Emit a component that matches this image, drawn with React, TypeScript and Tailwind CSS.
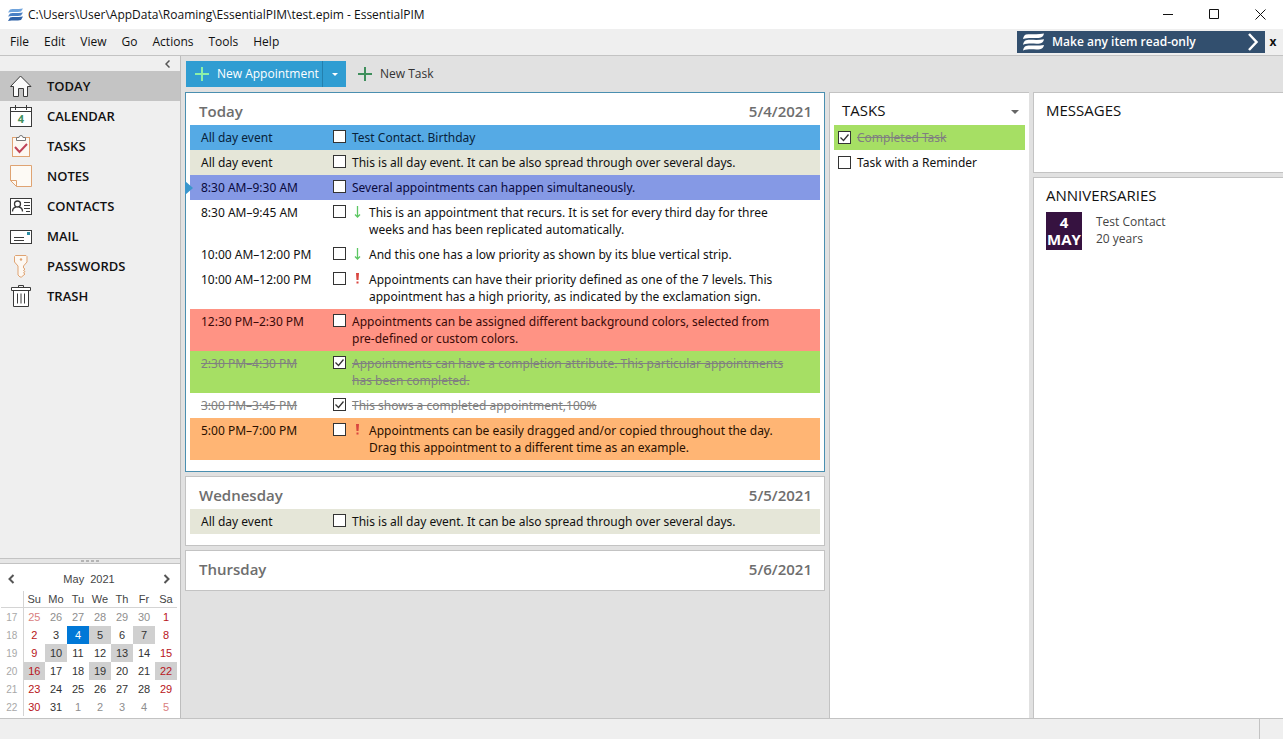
import { ReactNode } from "react";

interface Appointment {
  time: string;
  text: string;
  color?: string;
  done?: boolean;
  current?: boolean;
  priority?: "low" | "high";
}

interface Day {
  name: string;
  date: string;
  items: Appointment[];
}

const MENU = ["File", "Edit", "View", "Go", "Actions", "Tools", "Help"];

const DAYS: Day[] = [
  {
    name: "Today",
    date: "5/4/2021",
    items: [
      { time: "All day event", text: "Test Contact. Birthday", color: "bg-[#55aae5] text-[#08223a]" },
      {
        time: "All day event",
        text: "This is all day event. It can be also spread through over several days.",
        color: "bg-[#e5e6d8]",
      },
      {
        time: "8:30 AM–9:30 AM",
        text: "Several appointments can happen simultaneously.",
        color: "bg-[#8599e5] text-[#0a0a3c]",
        current: true,
      },
      {
        time: "8:30 AM–9:45 AM",
        text: "This is an appointment that recurs. It is set for every third day for three weeks and has been replicated automatically.",
        priority: "low",
      },
      {
        time: "10:00 AM–12:00 PM",
        text: "And this one has a low priority as shown by its blue vertical strip.",
        priority: "low",
      },
      {
        time: "10:00 AM–12:00 PM",
        text: "Appointments can have their priority defined as one of the 7 levels. This appointment has a high priority, as indicated by the exclamation sign.",
        priority: "high",
      },
      {
        time: "12:30 PM–2:30 PM",
        text: "Appointments can be assigned different background colors, selected from pre-defined or custom colors.",
        color: "bg-[#ff9384] text-[#3a0a08]",
      },
      {
        time: "2:30 PM–4:30 PM",
        text: "Appointments can have a completion attribute. This particular appointments has been completed.",
        color: "bg-[#a6df64]",
        done: true,
      },
      { time: "3:00 PM–3:45 PM", text: "This shows a completed appointment,100%", done: true },
      {
        time: "5:00 PM–7:00 PM",
        text: "Appointments can be easily dragged and/or copied throughout the day. Drag this appointment to a different time as an example.",
        color: "bg-[#ffb574] text-[#2a1000]",
        priority: "high",
      },
    ],
  },
  {
    name: "Wednesday",
    date: "5/5/2021",
    items: [
      {
        time: "All day event",
        text: "This is all day event. It can be also spread through over several days.",
        color: "bg-[#e5e6d8]",
      },
    ],
  },
  { name: "Thursday", date: "5/6/2021", items: [] },
];

const WEEKDAYS = ["Su", "Mo", "Tu", "We", "Th", "Fr", "Sa"];
const WEEKS = [
  { week: 17, days: [25, 26, 27, 28, 29, 30, 1] },
  { week: 18, days: [2, 3, 4, 5, 6, 7, 8] },
  { week: 19, days: [9, 10, 11, 12, 13, 14, 15] },
  { week: 20, days: [16, 17, 18, 19, 20, 21, 22] },
  { week: 21, days: [23, 24, 25, 26, 27, 28, 29] },
  { week: 22, days: [30, 31, 1, 2, 3, 4, 5] },
];
const BUSY = [5, 7, 10, 13, 16, 19, 22];

function Icon({ children }: { children: ReactNode }) {
  return (
    <svg width="24" height="24" viewBox="0 0 24 24" fill="none" strokeWidth="1" className="shrink-0">
      {children}
    </svg>
  );
}

const NAV: { label: string; icon: ReactNode }[] = [
  {
    label: "TODAY",
    icon: (
      <Icon>
        <path
          d="M1.500 12.500 11.500 2l10.500 10.500H18.500V22.500H14.500V14.500H9.500V22.500H4.500V12.500Z"
          fill="#fbfbfb"
          stroke="#3a3a3a"
          strokeLinejoin="round"
        />
      </Icon>
    ),
  },
  {
    label: "CALENDAR",
    icon: (
      <Icon>
        <rect x="1.500" y="3.500" width="21" height="19" fill="#fff" stroke="#3a3a3a" />
        <path d="M1.500 7.500h21M6.500 1v5M17.500 1v5" stroke="#3a3a3a" />
        <text x="12" y="19" textAnchor="middle" className="font-['Open_Sans'] text-[11px] font-bold" fill="#3f8f5c">
          4
        </text>
      </Icon>
    ),
  },
  {
    label: "TASKS",
    icon: (
      <Icon>
        <rect x="3.500" y="3.500" width="17" height="19" fill="#fdf8f2" stroke="#dfa372" />
        <path d="M7.500 6.500v-3h2.500a2 2 0 0 1 4 0h2.500v3Z" fill="#fff" stroke="#777" />
        <path d="m6 13 4.500 5L18 10" stroke="#c04257" strokeWidth="2" />
      </Icon>
    ),
  },
  {
    label: "NOTES",
    icon: (
      <Icon>
        <path d="M1.500 1.500h21v21H7.500l-6-6Z" fill="#fdfaf5" stroke="#dfa372" />
        <path d="M1.500 16.500h6v6" stroke="#dfa372" />
      </Icon>
    ),
  },
  {
    label: "CONTACTS",
    icon: (
      <Icon>
        <rect x="1.500" y="4.500" width="21" height="16" fill="#fff" stroke="#3a3a3a" />
        <circle cx="8.500" cy="10" r="3" stroke="#3a3a3a" strokeWidth="1.300" />
        <path d="M3.500 17.500c0-3 1.500-4 3.500-4.500M13.500 17.500c0-3-1.500-4-3.500-4.500" stroke="#3a3a3a" strokeWidth="1.300" />
        <path d="M15 8.500h6M15 11.500h6M15 14.500h6M17 17.500h4" stroke="#3a3a3a" />
      </Icon>
    ),
  },
  {
    label: "MAIL",
    icon: (
      <Icon>
        <rect x="1.500" y="6.500" width="21" height="13" fill="#fff" stroke="#3a3a3a" />
        <path d="M5 13.500h10M5 16.500h10" stroke="#3a3a3a" />
        <rect x="18" y="8" width="3" height="3" fill="#2b8ba3" />
      </Icon>
    ),
  },
  {
    label: "PASSWORDS",
    icon: (
      <Icon>
        <path
          d="M6.500 1.500h10.500l1 1v5.500l-3.500 4v2l1.500 1-1.500 1.500 1.500 1-1.500 1.500 1.500 1-3.500 3h-1.500l-2-2v-9l-3.500-4V2.500Z"
          fill="#fdf8f2"
          stroke="#dfa372"
        />
        <circle cx="12" cy="5.500" r="1.200" fill="#dfa372" />
      </Icon>
    ),
  },
  {
    label: "TRASH",
    icon: (
      <Icon>
        <path d="M4.500 6.500h15v16h-15Z" fill="#fff" stroke="#3a3a3a" />
        <path d="M2.500 3.500h19v3h-19Z" fill="#fff" stroke="#3a3a3a" />
        <path d="M9.500 3.500v-2h5v2M8.500 9.500v10M12 9.500v10M15.500 9.500v10" stroke="#3a3a3a" />
      </Icon>
    ),
  },
];

function Plus({ color }: { color: string }) {
  return (
    <svg width="14" height="14" viewBox="0 0 14 14" className="shrink-0">
      <path d="M7 0v14M0 7h14" stroke={color} strokeWidth="2" />
    </svg>
  );
}

function Checkbox({ label, checked }: { label: string; checked?: boolean }) {
  return (
    <span className="grid h-[13px] w-[13px] shrink-0">
      <input
        type="checkbox"
        aria-label={label}
        defaultChecked={checked}
        className="peer col-start-1 row-start-1 h-[13px] w-[13px] appearance-none border border-[#333] bg-white"
      />
      <svg
        viewBox="0 0 13 13"
        className="pointer-events-none invisible col-start-1 row-start-1 h-[13px] w-[13px] peer-checked:visible"
      >
        <path d="m2.500 6.500 3 3 5-6" fill="none" stroke="#333" strokeWidth="1.300" />
      </svg>
    </span>
  );
}

function Priority({ level }: { level: "low" | "high" }) {
  if (level === "low") {
    return (
      <svg width="11" height="17" viewBox="0 0 11 17" className="mr-1.5 shrink-0">
        <path d="M5.500 2v11M3 10.500l2.500 2.500 2.500-2.500" fill="none" stroke="#5cc763" strokeWidth="1.300" />
      </svg>
    );
  }
  return (
    <svg width="11" height="17" viewBox="0 0 11 17" className="mr-1.5 shrink-0">
      <path d="M4 2h3l-.5 7h-2ZM4.500 10.500h2v2h-2Z" fill="#d9453f" />
    </svg>
  );
}

function AppointmentRow({ item }: { item: Appointment }) {
  const tone = item.done ? "text-[#808080] line-through" : "";
  return (
    <li className={`relative flex py-1 pr-7 pl-[11px] ${item.color ?? ""}`}>
      {item.current && (
        <svg width="8" height="14" viewBox="0 0 8 14" className="absolute top-1.5 -left-[5px]">
          <path d="M0 0v14l8-7Z" fill="#3a96cc" />
        </svg>
      )}
      <span className={`w-[132px] shrink-0 ${tone}`}>
        <span>{item.time}</span>
      </span>
      <span className="mt-px mr-1.5 shrink-0">
        <Checkbox label={item.text} checked={item.done} />
      </span>
      {item.priority && <Priority level={item.priority} />}
      <span className={tone}>{item.text}</span>
    </li>
  );
}

function DayPanel({ day, active }: { day: Day; active: boolean }) {
  return (
    <section className={`border bg-white px-1 ${active ? "border-[#4a8fb0]" : "border-[#c3c3c3]"}`}>
      <h2 className="flex h-8 items-center justify-between pt-1 pr-2 pl-[9px] text-[15px] font-semibold text-[#6e6e6e]">
        <span>{day.name}</span>
        <span>{day.date}</span>
      </h2>
      <ul className={`font-['Noto_Sans','Open_Sans',sans-serif] text-[12px] leading-[17px] ${day.items.length ? "pb-[11px]" : "pb-[7px]"}`}>
        {day.items.map((item, i) => (
          <AppointmentRow key={i} item={item} />
        ))}
      </ul>
    </section>
  );
}

function dayClass(day: number, row: number, col: number) {
  const outside = (row === 0 && day > 20) || (row === 5 && day < 20);
  const weekend = col === 0 || col === 6;
  if (!outside && day === 4) return "bg-[#0078d7] text-white";
  const text = outside
    ? weekend
      ? "text-[#d98080]"
      : "text-[#8e8e8e]"
    : weekend
      ? "text-[#b81420]"
      : "text-[#333]";
  return !outside && BUSY.includes(day) ? `${text} bg-[#d0d0d0]` : text;
}

function MiniCalendar() {
  return (
    <section className="border-t border-[#c3c3c3] bg-white pb-0.5 font-['Liberation_Sans',Arial,sans-serif] text-[11px] text-[#444]">
      <header className="flex h-[27px] items-center justify-between px-2 pt-1">
        <button type="button" aria-label="Previous month">
          <svg width="7" height="10" viewBox="0 0 7 10">
            <path d="M5.500 1 1.500 5l4 4" fill="none" stroke="#555" strokeWidth="2" />
          </svg>
        </button>
        <span className="flex gap-1.5">
          <span>May</span>
          <span>2021</span>
        </span>
        <button type="button" aria-label="Next month" className="mr-0.5">
          <svg width="7" height="10" viewBox="0 0 7 10">
            <path d="M1.500 1l4 4-4 4" fill="none" stroke="#555" strokeWidth="2" />
          </svg>
        </button>
      </header>
      <div className="pr-[3px] pl-px">
        <table className="w-full table-fixed border-collapse text-center">
          <thead>
            <tr className="h-[17px] border-b border-[#d4d4d4]">
              <th aria-label="Week" className="w-[22px] border-r border-[#d4d4d4]" />
              {WEEKDAYS.map((d) => (
                <th key={d} className="p-0 font-normal leading-4">
                  {d}
                </th>
              ))}
            </tr>
          </thead>
          <tbody>
            {WEEKS.map((w, row) => (
              <tr key={w.week} className="h-[18px]">
                <th className="border-r border-[#d4d4d4] p-0 text-[10px] font-normal text-[#a8a8a8]">{w.week}</th>
                {w.days.map((d, col) => (
                  <td key={col} className={`p-0 leading-[18px] ${dayClass(d, row, col)}`}>
                    {d}
                  </td>
                ))}
              </tr>
            ))}
          </tbody>
        </table>
      </div>
    </section>
  );
}

function Sidebar() {
  return (
    <aside className="flex w-[181px] shrink-0 flex-col border-r border-[#bdbdbd] bg-[#efefef]">
      <button type="button" aria-label="Collapse" className="flex h-[15px] items-center justify-end pr-2.5">
        <svg width="5" height="8" viewBox="0 0 5 8">
          <path d="M4.500.5 1 4l3.500 3.500" fill="none" stroke="#555" strokeWidth="1.500" />
        </svg>
      </button>
      <nav className="flex-1">
        {NAV.map((item, i) => (
          <a
            key={item.label}
            href="#"
            className={`flex h-[30px] items-center gap-3.5 pl-[9px] text-[13px] font-semibold text-[#111] ${i === 0 ? "bg-[#c4c4c4]" : ""}`}
          >
            {item.icon}
            <span className="pt-0.5">{item.label}</span>
          </a>
        ))}
      </nav>
      <div className="flex h-[5px] items-center justify-center gap-0.5 border-t border-[#c3c3c3] bg-[#e6e6e6]">
        {[0, 1, 2, 3].map((n) => (
          <span key={n} className="h-0.5 w-[3px] bg-[#b4b4b4]" />
        ))}
      </div>
      <MiniCalendar />
    </aside>
  );
}

export default function App() {
  return (
    <div className="flex min-h-screen flex-col bg-[#efefef] font-['Open_Sans','Noto_Sans',sans-serif] text-[12px] text-[#111]">
      <header className="flex h-[29px] items-center bg-white pl-2">
        <svg width="15" height="14" viewBox="0 0 15 14" className="mr-[5px]">
          <path d="M2 1.500C5 .5 9 1.500 15 .5L13 3.500C9 4.500 5 3.500 0 4.500Z" fill="#6fa3dc" />
          <path d="M2 5.500C5 4.500 9 5.500 15 4.500L13 7.500C9 8.500 5 7.500 0 8.500Z" fill="#4a80c4" />
          <path d="M2 9.500C5 8.500 9 9.500 15 8.500L13 12C9 13 5 12 0 13Z" fill="#2f62a8" />
        </svg>
        <h1 className="flex-1">C:\Users\User\AppData\Roaming\EssentialPIM\test.epim - EssentialPIM</h1>
        <div className="flex">
          <button type="button" aria-label="Minimize" className="flex w-[46px] justify-center">
            <svg width="11" height="11" viewBox="0 0 11 11">
              <path d="M0 5.500h10" stroke="#111" />
            </svg>
          </button>
          <button type="button" aria-label="Maximize" className="flex w-[46px] justify-center">
            <svg width="11" height="11" viewBox="0 0 11 11">
              <path d="M.5.5h9v9h-9Z" fill="none" stroke="#111" />
            </svg>
          </button>
          <button type="button" aria-label="Close" className="flex w-[46px] justify-center">
            <svg width="11" height="11" viewBox="0 0 11 11">
              <path d="m.5.5 10 10m0-10-10 10" stroke="#111" />
            </svg>
          </button>
        </div>
      </header>

      <div className="flex h-[27px] items-center border-b border-[#c3c3c3] pl-2.5">
        <nav className="flex flex-1 gap-[15px]">
          {MENU.map((m) => (
            <button key={m} type="button">
              {m}
            </button>
          ))}
        </nav>
        <a href="#" className="flex h-[22px] w-[248px] items-center bg-[#324f6e] px-1.5 font-semibold text-white">
          <svg width="21" height="18" viewBox="0 0 21 18" className="mr-2">
            <path
              d="M3 1.500C8 .5 14 2 21 .5C20.500 3 19 4.500 17 4.800C12 5.500 6 4 0 6C.5 3.500 1.500 2 3 1.500ZM3 7.200C8 6.200 14 7.700 21 6.200C20.500 8.700 19 10.200 17 10.500C12 11.200 6 9.700 0 11.700C.5 9.200 1.500 7.700 3 7.200ZM3 12.900C8 11.900 14 13.400 21 11.900C20.500 14.400 19 15.900 17 16.200C12 16.900 6 15.400 0 17.400C.5 14.900 1.500 13.400 3 12.900Z"
              fill="#fff"
            />
          </svg>
          <span className="flex-1">Make any item read-only</span>
          <svg width="11" height="18" viewBox="0 0 11 18">
            <path d="m1 1 7.500 8L1 17" fill="none" stroke="#fff" strokeWidth="2.500" />
          </svg>
        </a>
        <button type="button" aria-label="Dismiss" className="w-[18px] pr-0.5 text-center font-bold">
          x
        </button>
      </div>

      <div className="flex flex-1">
        <Sidebar />
        <main className="flex min-w-0 flex-1 flex-col bg-[#e1e1e1] pl-1">
          <div className="flex h-9 items-center pl-px">
            <div className="flex h-[26px] bg-[#309dd2] text-white">
              <button type="button" className="flex w-[137px] items-center gap-2 border-r border-[#2480ae] pl-[9px] whitespace-nowrap">
                <Plus color="#8df0a8" />
                New Appointment
              </button>
              <button type="button" aria-label="More new items" className="flex w-[23px] items-center justify-center">
                <svg width="6" height="3" viewBox="0 0 6 3">
                  <path d="M0 0h6L3 3Z" fill="#fff" />
                </svg>
              </button>
            </div>
            <button type="button" className="ml-3 flex items-center gap-2 text-[#333]">
              <Plus color="#3f8f5c" />
              New Task
            </button>
          </div>

          <div className="grid flex-1 grid-cols-[minmax(0,1fr)_200px_250px] gap-1">
            <div className="flex flex-col gap-1">
              {DAYS.map((day, i) => (
                <DayPanel key={day.date} day={day} active={i === 0} />
              ))}
            </div>

            <section className="border-t border-l border-[#c3c3c3] bg-white px-1">
              <header className="flex h-8 items-center justify-between pt-0.5 pr-1.5 pl-2">
                <h2 className="text-[15px]">TASKS</h2>
                <button type="button" aria-label="Task options" className="pt-1">
                  <svg width="8" height="4" viewBox="0 0 8 4">
                    <path d="M0 0h8L4 4Z" fill="#666" />
                  </svg>
                </button>
              </header>
              <ul className="font-['Noto_Sans','Open_Sans',sans-serif] leading-[17px]">
                <li className="flex bg-[#a6df64] py-1 pl-1">
                  <span className="mt-0.5 mr-1.5 shrink-0">
                    <Checkbox label="Completed Task" checked />
                  </span>
                  <span className="text-[#808080] line-through">Completed Task</span>
                </li>
                <li className="flex py-1 pl-1">
                  <span className="mt-0.5 mr-1.5 shrink-0">
                    <Checkbox label="Task with a Reminder" />
                  </span>
                  <span>Task with a Reminder</span>
                </li>
              </ul>
            </section>

            <div className="flex flex-col gap-1">
              <section className="h-[81px] border-y border-l border-[#c3c3c3] bg-white px-3 pt-[7px]">
                <h2 className="text-[15px] leading-5">MESSAGES</h2>
              </section>
              <section className="flex-1 border-t border-l border-[#c3c3c3] bg-white px-3 pt-[7px]">
                <h2 className="text-[15px] leading-5">ANNIVERSARIES</h2>
                <div className="mt-[7px] flex gap-3.5">
                  <div className="flex h-[38px] w-9 flex-col items-center justify-center bg-[#361240] text-[15px] leading-[17px] font-bold text-white">
                    <span>4</span>
                    <span>MAY</span>
                  </div>
                  <div className="pt-px leading-[17px] text-[#444]">
                    <p>Test Contact</p>
                    <p>20 years</p>
                  </div>
                </div>
              </section>
            </div>
          </div>
        </main>
      </div>

      <footer className="flex h-[21px] justify-end border-t border-[#c3c3c3]">
        <div className="w-6 border-l border-[#c3c3c3]" />
      </footer>
    </div>
  );
}
